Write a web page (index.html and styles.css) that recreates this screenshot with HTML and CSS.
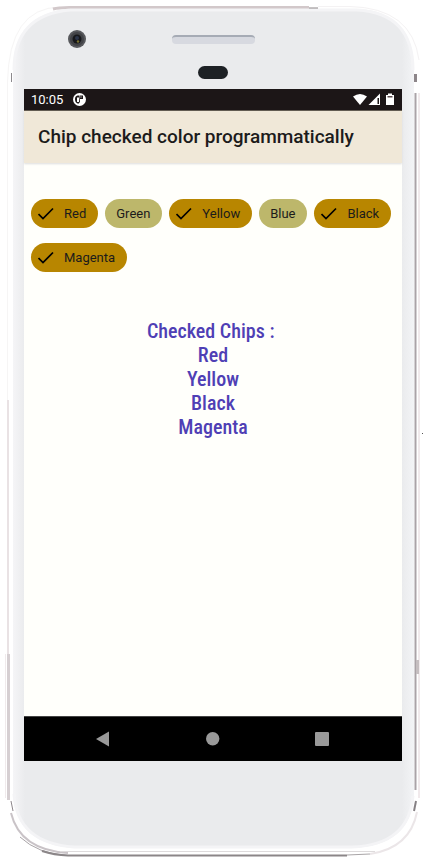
FILE: index.html
```html
<!DOCTYPE html>
<html lang="en">
<head>
<meta charset="utf-8">
<meta name="viewport" content="width=device-width, initial-scale=1">
<title>Chip checked color programmatically</title>
<link rel="stylesheet" href="styles.css">
</head>
<body>
<div class="phone">
  <svg class="shell" viewBox="0 0 423 861" preserveAspectRatio="none" aria-hidden="true">
    <defs>
      <linearGradient id="face" x1="0" x2="1" y1="0" y2="0">
        <stop offset="0" stop-color="#f5f5f7"/>
        <stop offset=".03" stop-color="#eaebed"/>
        <stop offset=".97" stop-color="#eaebed"/>
        <stop offset="1" stop-color="#f3f4f6"/>
      </linearGradient>
    </defs>
    <g fill="none">
      <path d="M7.500 400V82Q9 8 60 7" stroke="#f6f5f5"/>
      <path d="M8 400V654" stroke="#e9e2e4" stroke-width="2"/>
      <path d="M8.500 654V800" stroke="#d6cfd2" stroke-width="3"/>
      <path d="M5.500 654V798" stroke="#f0eaec"/>
      <path d="M11.500 73V82" stroke="#8d8a8e"/>
      <path d="M11 801L13 811" stroke="#8d868b"/>
      <path d="M11 813Q20 850 68 853" stroke="#c9c3c7" stroke-width="2"/>
      <path d="M20 837Q38 854 68 855.500" stroke="#a9a4a7"/>
      <path d="M42 851Q54 855 68 855.500H347" stroke="#8b8688" stroke-width="2"/>
      <path d="M60 851.500H375" stroke="#dedbdc"/>
      <path d="M347 855L370 854" stroke="#a9a5a7"/>
      <path d="M370 854Q410 848 417 812" stroke="#ebe6e8" stroke-width="2"/>
      <path d="M53 9Q60 7 75 7.500H309" stroke="#d2c8ca" stroke-width="3"/>
      <path d="M309 8.500H318" stroke="#8d8688" stroke-width="2"/>
      <path d="M318 6.500H350Q412 8 419 60" stroke="#f4f2f3"/>
      <path d="M415.500 74V82" stroke="#8d868a" stroke-width="3"/>
      <path d="M415.500 93V790" stroke="#aaa3a7" stroke-width="2"/>
      <path d="M419 93V798" stroke="#f1eaec" stroke-width="2"/>
      <path d="M417.500 660V674" stroke="#c5bec0" stroke-width="3"/>
      <path d="M422 433.500H423" stroke="#555"/>
      <path d="M416 801L414 811" stroke="#858084" stroke-width="2"/>
    </g>
    <path d="M70 9H357Q414 12 414 70V796Q410 846 352 848H74Q16 844 13 794V70Q13 14 70 9Z" fill="url(#face)"/>
    <path d="M70 10H357Q413 13 413 70M413 796Q409 845 352 847H74Q17 843 14 794M14 70Q14 15 70 10" fill="none" stroke="#f4f4f6" stroke-width="3"/>
  </svg>

  <div class="bezel-top">
    <svg class="camera" viewBox="0 0 18 18" aria-hidden="true">
      <circle cx="9" cy="9" r="9" fill="#57585c"/>
      <circle cx="9" cy="9" r="7" fill="#424347"/>
      <circle cx="9" cy="9" r="4.500" fill="#17181b"/>
      <circle cx="9" cy="8" r="2" fill="#2b3448"/>
      <circle cx="10" cy="11.500" r="1.200" fill="#77702e"/>
    </svg>
    <div class="earpiece"></div>
    <div class="sensor"></div>
  </div>

  <div class="screen">
    <div class="status">
      <span>10:05</span>
      <svg class="app-icon" viewBox="0 0 13 13" aria-hidden="true">
        <circle cx="6.500" cy="6.500" r="6.500" fill="#fff"/>
        <path d="M6 2.500H4.500Q2 3 2 6Q2 9.500 4.500 10.500H6V9H4V4.500H6Z" fill="#1c1617"/>
        <path d="M6.500 2.500H10V6H7V9.500H6Z" fill="#1c1617"/>
        <path d="M7.500 3.500H8.500V4.500H7.500Z" fill="#fff"/>
      </svg>
      <svg class="signals" viewBox="0 0 42 13" aria-hidden="true">
        <path d="M0 3.500Q7 -1.500 14 3.500L7 12Z" fill="#fff"/>
        <path d="M27 .500V12H15.500Z" fill="#fff"/>
        <path d="M24.500 5H26V11H24.500Z" fill="#1c1617"/>
        <path d="M35 .500H39V2H41V12H33V2H35Z" fill="#fff"/>
        <path d="M34.500 3H39.500V4.500H34.500Z" fill="#59494b"/>
      </svg>
    </div>
    <header class="app-bar"><h1>Chip checked color programmatically</h1></header>
    <main>
      <div class="chips">
        <label class="chip"><input type="checkbox" checked><svg viewBox="0 0 16 14" aria-hidden="true"><path d="M.500 7L5 11.500L15 1.500"/></svg>Red</label>
        <label class="chip"><input type="checkbox"><svg viewBox="0 0 16 14" aria-hidden="true"><path d="M.500 7L5 11.500L15 1.500"/></svg>Green</label>
        <label class="chip"><input type="checkbox" checked><svg viewBox="0 0 16 14" aria-hidden="true"><path d="M.500 7L5 11.500L15 1.500"/></svg>Yellow</label>
        <label class="chip"><input type="checkbox"><svg viewBox="0 0 16 14" aria-hidden="true"><path d="M.500 7L5 11.500L15 1.500"/></svg>Blue</label>
        <label class="chip"><input type="checkbox" checked><svg viewBox="0 0 16 14" aria-hidden="true"><path d="M.500 7L5 11.500L15 1.500"/></svg>Black</label>
        <label class="chip"><input type="checkbox" checked><svg viewBox="0 0 16 14" aria-hidden="true"><path d="M.500 7L5 11.500L15 1.500"/></svg>Magenta</label>
      </div>
      <output class="result">Checked Chips :&nbsp;<br>Red<br>Yellow<br>Black<br>Magenta</output>
    </main>
    <nav class="nav">
      <button type="button" aria-label="Back"><svg viewBox="0 0 16 16"><path d="M0 8L13 .500V15.500Z"/></svg></button>
      <button type="button" aria-label="Home"><svg viewBox="0 0 16 16"><circle cx="7.700" cy="7.700" r="6.700"/></svg></button>
      <button type="button" aria-label="Recents"><svg viewBox="0 0 16 16"><rect x="1" y="1" width="14" height="14" rx="1"/></svg></button>
    </nav>
  </div>
</div>
</body>
</html>
```
FILE: styles.css
```css
* {
  box-sizing: border-box;
}

body {
  margin: 0;
  background: #fff;
  color: #1c1b1b;
  font-family: Roboto, sans-serif;
}

.phone {
  position: relative;
  display: flex;
  flex-direction: column;
  min-height: 100vh;
  padding: 0 21px 100px 24px;
}

.shell {
  position: absolute;
  inset: 0;
  width: 100%;
  height: 100%;
}

.bezel-top {
  position: relative;
  display: grid;
  grid-template-columns: 1fr auto 1fr;
  align-content: start;
  align-items: center;
  row-gap: 18px;
  height: 89px;
  padding-top: 30px;
}

.camera {
  width: 18px;
  height: 18px;
  margin-left: 44px;
}

.earpiece {
  width: 83px;
  height: 9px;
  border-top: 2px solid #a6abb5;
  border-radius: 4px;
  background: #d7d9e0;
}

.sensor {
  grid-column: 2;
  justify-self: center;
  width: 30px;
  height: 13px;
  border-radius: 7px;
  background: #1d2125;
}

.screen {
  position: relative;
  flex: 1;
  display: flex;
  flex-direction: column;
  background: #fffffb;
}

.status {
  display: flex;
  align-items: center;
  gap: 10px;
  height: 22px;
  padding: 0 7px;
  border-bottom: 1px solid #5a5247;
  background: #1c1617;
  color: #fff;
  font-size: 13px;
}

.app-icon {
  width: 13px;
  height: 13px;
}

.signals {
  width: 42px;
  height: 13px;
  margin-left: auto;
}

.app-bar {
  padding: 14px;
  background: #f0e8d8;
  box-shadow: 0 1px 2px #dddddd;
}

h1 {
  margin: 0;
  font-size: 19px;
  font-weight: 500;
  line-height: 24px;
  white-space: nowrap;
}

main {
  flex: 1;
  padding: 36px 7px;
}

.chips {
  display: flex;
  flex-wrap: wrap;
  gap: 15px 7px;
}

.chip {
  display: flex;
  align-items: center;
  gap: 10px;
  height: 29px;
  padding: 0 12px 0 11px;
  border-radius: 15px;
  background: #bdb76b;
  font-size: 13px;
}

.chip input {
  position: absolute;
  opacity: 0;
}

.chip svg {
  display: none;
  width: 16px;
  height: 14px;
  fill: none;
  stroke: #000;
  stroke-width: 1.7;
}

.chip:has(:checked) {
  padding-left: 7px;
  background: #b88600;
}

.chip :checked + svg {
  display: block;
}

.result {
  display: block;
  margin-top: 47px;
  color: #4f3fb5;
  font-family: "Roboto Condensed", Roboto, sans-serif;
  font-size: 20px;
  font-weight: 500;
  line-height: 24px;
  text-align: center;
}

.nav {
  display: flex;
  justify-content: center;
  gap: 77px;
  height: 45px;
  border-top: 1px solid #444;
  background: #000;
}

.nav button {
  width: 32px;
  padding: 0;
  border: 0;
  background: none;
}

.nav svg {
  display: block;
  width: 16px;
  height: 16px;
  margin: auto;
  fill: #999;
}
```
